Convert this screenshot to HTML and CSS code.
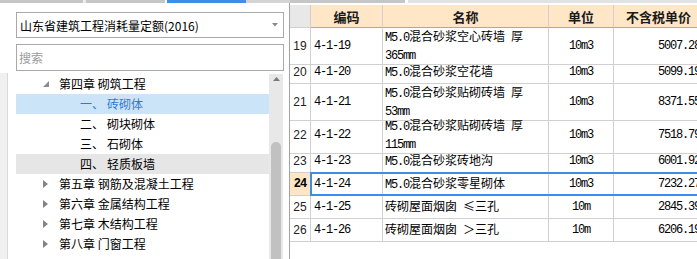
FILE: index.html
```html
<!DOCTYPE html>
<html lang="zh-CN">
<head>
<meta charset="utf-8">
<title>定额</title>
<link rel="stylesheet" href="styles.css">
</head>
<body>
<div class="tabs">
  <span class="tb tb-a"></span><span class="tb tb-b"></span><span class="tb tb-c"></span><span class="tb tb-d"></span><span class="tb tb-e"></span><span class="tb tb-f"></span><span class="tb tb-g"></span><span class="tb tb-h"></span><span class="tb tb-i"></span>
</div>
<div class="main">
  <aside class="left">
    <div class="select">
      <span>山东省建筑工程消耗量定额(2016)</span>
      <svg class="caret" width="6" height="4" viewBox="0 0 6 4"><polygon points="0,0 6,0 3,3.5" fill="#8a8a8a"/></svg>
    </div>
    <div class="search">搜索</div>
    <div class="tree-wrap">
      <ul class="tree">
        <li class="ch"><span class="tw"><svg width="6" height="6" viewBox="0 0 6 6"><polygon points="6,0 6,6 0,6" fill="#8c8c8c"/></svg></span>第四章 砌筑工程</li>
        <li class="sub sel"><span class="num">一、</span>砖砌体</li>
        <li class="sub"><span class="num">二、</span>砌块砌体</li>
        <li class="sub"><span class="num">三、</span>石砌体</li>
        <li class="sub hov"><span class="num">四、</span>轻质板墙</li>
        <li class="ch"><span class="tw"><svg width="5" height="8" viewBox="0 0 5 8"><polygon points="0,0 5,4 0,8" fill="#848484"/></svg></span>第五章 钢筋及混凝土工程</li>
        <li class="ch"><span class="tw"><svg width="5" height="8" viewBox="0 0 5 8"><polygon points="0,0 5,4 0,8" fill="#848484"/></svg></span>第六章 金属结构工程</li>
        <li class="ch"><span class="tw"><svg width="5" height="8" viewBox="0 0 5 8"><polygon points="0,0 5,4 0,8" fill="#848484"/></svg></span>第七章 木结构工程</li>
        <li class="ch"><span class="tw"><svg width="5" height="8" viewBox="0 0 5 8"><polygon points="0,0 5,4 0,8" fill="#848484"/></svg></span>第八章 门窗工程</li>
      </ul>
      <div class="vs">
        <svg class="up" width="7" height="4" viewBox="0 0 7 4"><polygon points="0,4 7,4 3.5,0" fill="#7a7a7a"/></svg>
        <div class="thumb"></div>
      </div>
    </div>
  </aside>
  <section class="right">
    <div class="grid">
      <div class="row head">
        <div class="cell rn"></div>
        <div class="cell">编码</div>
        <div class="cell">名称</div>
        <div class="cell">单位</div>
        <div class="cell">不含税单价</div>
      </div>
      <div class="row tall">
        <div class="cell rn">19</div>
        <div class="cell code mono">4-1-19</div>
        <div class="cell name"><span><span class="mono">M5.0</span>混合砂浆空心砖墙<span class="mono"> </span>厚<br><span class="mono">365mm</span></span></div>
        <div class="cell unit mono">10m3</div>
        <div class="cell price mono">5007.28</div>
      </div>
      <div class="row">
        <div class="cell rn">20</div>
        <div class="cell code mono">4-1-20</div>
        <div class="cell name"><span><span class="mono">M5.0</span>混合砂浆空花墙</span></div>
        <div class="cell unit mono">10m3</div>
        <div class="cell price mono">5099.19</div>
      </div>
      <div class="row tall">
        <div class="cell rn">21</div>
        <div class="cell code mono">4-1-21</div>
        <div class="cell name"><span><span class="mono">M5.0</span>混合砂浆贴砌砖墙<span class="mono"> </span>厚<br><span class="mono">53mm</span></span></div>
        <div class="cell unit mono">10m3</div>
        <div class="cell price mono">8371.55</div>
      </div>
      <div class="row tall">
        <div class="cell rn">22</div>
        <div class="cell code mono">4-1-22</div>
        <div class="cell name"><span><span class="mono">M5.0</span>混合砂浆贴砌砖墙<span class="mono"> </span>厚<br><span class="mono">115mm</span></span></div>
        <div class="cell unit mono">10m3</div>
        <div class="cell price mono">7518.79</div>
      </div>
      <div class="row">
        <div class="cell rn">23</div>
        <div class="cell code mono">4-1-23</div>
        <div class="cell name"><span><span class="mono">M5.0</span>混合砂浆砖地沟</span></div>
        <div class="cell unit mono">10m3</div>
        <div class="cell price mono">6001.92</div>
      </div>
      <div class="row selrow">
        <div class="cell rn cur">24</div>
        <div class="cell code mono">4-1-24</div>
        <div class="cell name"><span><span class="mono">M5.0</span>混合砂浆零星砌体</span></div>
        <div class="cell unit mono">10m3</div>
        <div class="cell price mono">7232.27</div>
      </div>
      <div class="row">
        <div class="cell rn">25</div>
        <div class="cell code mono">4-1-25</div>
        <div class="cell name"><span>砖砌屋面烟囱<span class="mono"> </span>≤三孔</span></div>
        <div class="cell unit mono">10m</div>
        <div class="cell price mono">2845.39</div>
      </div>
      <div class="row">
        <div class="cell rn">26</div>
        <div class="cell code mono">4-1-26</div>
        <div class="cell name"><span>砖砌屋面烟囱<span class="mono"> </span>＞三孔</span></div>
        <div class="cell unit mono">10m</div>
        <div class="cell price mono">6206.19</div>
      </div>
    </div>
  </section>
</div>
</body>
</html>
```

FILE: styles.css
```css
html, body {
  margin: 0;
  padding: 0;
}
body {
  width: 697px;
  height: 259px;
  overflow: hidden;
  background: #fff;
  color: #000;
  font-family: "Noto Sans CJK SC", "Noto Sans", sans-serif;
  font-size: 12px;
}

/* top tab strip */
.tabs {
  display: flex;
  height: 3px;
}
.tb { display: block; height: 3px; }
.tb-a { width: 83px; background: #c6c6c6; }
.tb-b { width: 3px; background: #ececec; }
.tb-c { width: 79px; background: #c6c6c6; }
.tb-d { width: 2px; background: #fff; }
.tb-e { width: 79px; background: #3b8fe8; }
.tb-f { width: 44px; background: #d4d4d4; }
.tb-g { width: 115px; background: #c6c6c6; }
.tb-h { width: 3px; background: #fff; }
.tb-i { flex: 1; background: #e2e2e2; }

.main {
  display: flex;
  height: 256px;
}

/* left pane */
.left {
  width: 290px;
  flex: none;
  box-sizing: border-box;
  padding: 9px 5px 0 16px;
  border-right: 1px solid #a3a3a3;
  display: flex;
  flex-direction: column;
  background: #fff linear-gradient(to right, #f0f0f0 0, #f0f0f0 7px, #d9d9d9 7px, #d9d9d9 8px, transparent 8px) 0 70px / 8px 200px no-repeat;
}
.select {
  height: 26px;
  box-sizing: border-box;
  border: 1px solid #a9a9a9;
  display: flex;
  align-items: center;
  justify-content: space-between;
  padding: 0 5px 0 3px;
  white-space: nowrap;
}
.search {
  margin-top: 6px;
  height: 27px;
  box-sizing: border-box;
  border: 1px solid #a9a9a9;
  display: flex;
  align-items: center;
  padding: 0 2px;
  color: #9c9c9c;
}
.tree-wrap {
  margin-top: 3px;
  flex: 1;
  display: flex;
  min-height: 0;
}
.tree {
  flex: 1;
  list-style: none;
  margin: 0;
  padding: 0;
}
.tree li {
  height: 20px;
  line-height: 20px;
  display: flex;
  align-items: center;
  white-space: nowrap;
}
.tree .ch { padding-left: 27px; }
.tw {
  width: 16px;
  display: flex;
  align-items: center;
}
.tree .sub { padding-left: 64px; }
.num {
  display: inline-block;
  width: 27px;
}
.tree .sel {
  background: #cce4f8;
  color: #2f7bd4;
}
.tree .hov { background: #e6e6e6; }

.vs {
  width: 14px;
  margin-right: 1px;
  background: #e8e8e8;
  display: flex;
  flex-direction: column;
  align-items: center;
}
.up { margin-top: 3px; flex: none; }
.thumb {
  margin-top: 61px;
  flex: 1;
  width: 10px;
  background: #c1c1c1;
  border-radius: 5px 5px 0 0;
}

/* right pane */
.right {
  flex: 1;
  overflow: hidden;
  padding-top: 2px;
}
.grid {
  width: 414px;
}
.row {
  display: grid;
  grid-template-columns: 21px 72px 166px 65px 90px;
  height: 23px;
  position: relative;
}
.row.tall { height: 33px; }
.cell {
  box-sizing: border-box;
  border-right: 1px solid #d0d0d0;
  border-bottom: 1px solid #d0d0d0;
  display: flex;
  align-items: center;
  overflow: hidden;
  white-space: nowrap;
}
.head .cell {
  background: #fee6c7;
  border-bottom-color: #86b0de;
  justify-content: center;
  font-weight: bold;
  font-size: 13px;
  color: #1a1a1a;
}
.head .cell.rn {
  background: #e8e8e8;
  border-bottom-color: #d0d0d0;
}
.rn {
  justify-content: center;
  font-family: "Liberation Sans", "DejaVu Sans", sans-serif;
  font-size: 12px;
  color: #222;
}
.rn.cur {
  background: #fde5c6;
  font-family: "Liberation Mono", monospace;
  font-weight: bold;
  font-size: 12px;
  letter-spacing: -1px;
  color: #000;
}
.mono {
  font-family: "Liberation Mono", "DejaVu Sans Mono", monospace;
  font-size: 12px;
  letter-spacing: -1.2px;
}
.code { padding-left: 3px; }
.name {
  padding-left: 2px;
  line-height: 15px;
  overflow: visible;
}
.unit { justify-content: center; }
.price {
  justify-content: flex-end;
  padding-right: 3px;
}
.selrow::after {
  content: "";
  position: absolute;
  left: 20px;
  top: -1px;
  right: -2px;
  bottom: 0;
  border: 2px solid #3c8de8;
  pointer-events: none;
}
```
